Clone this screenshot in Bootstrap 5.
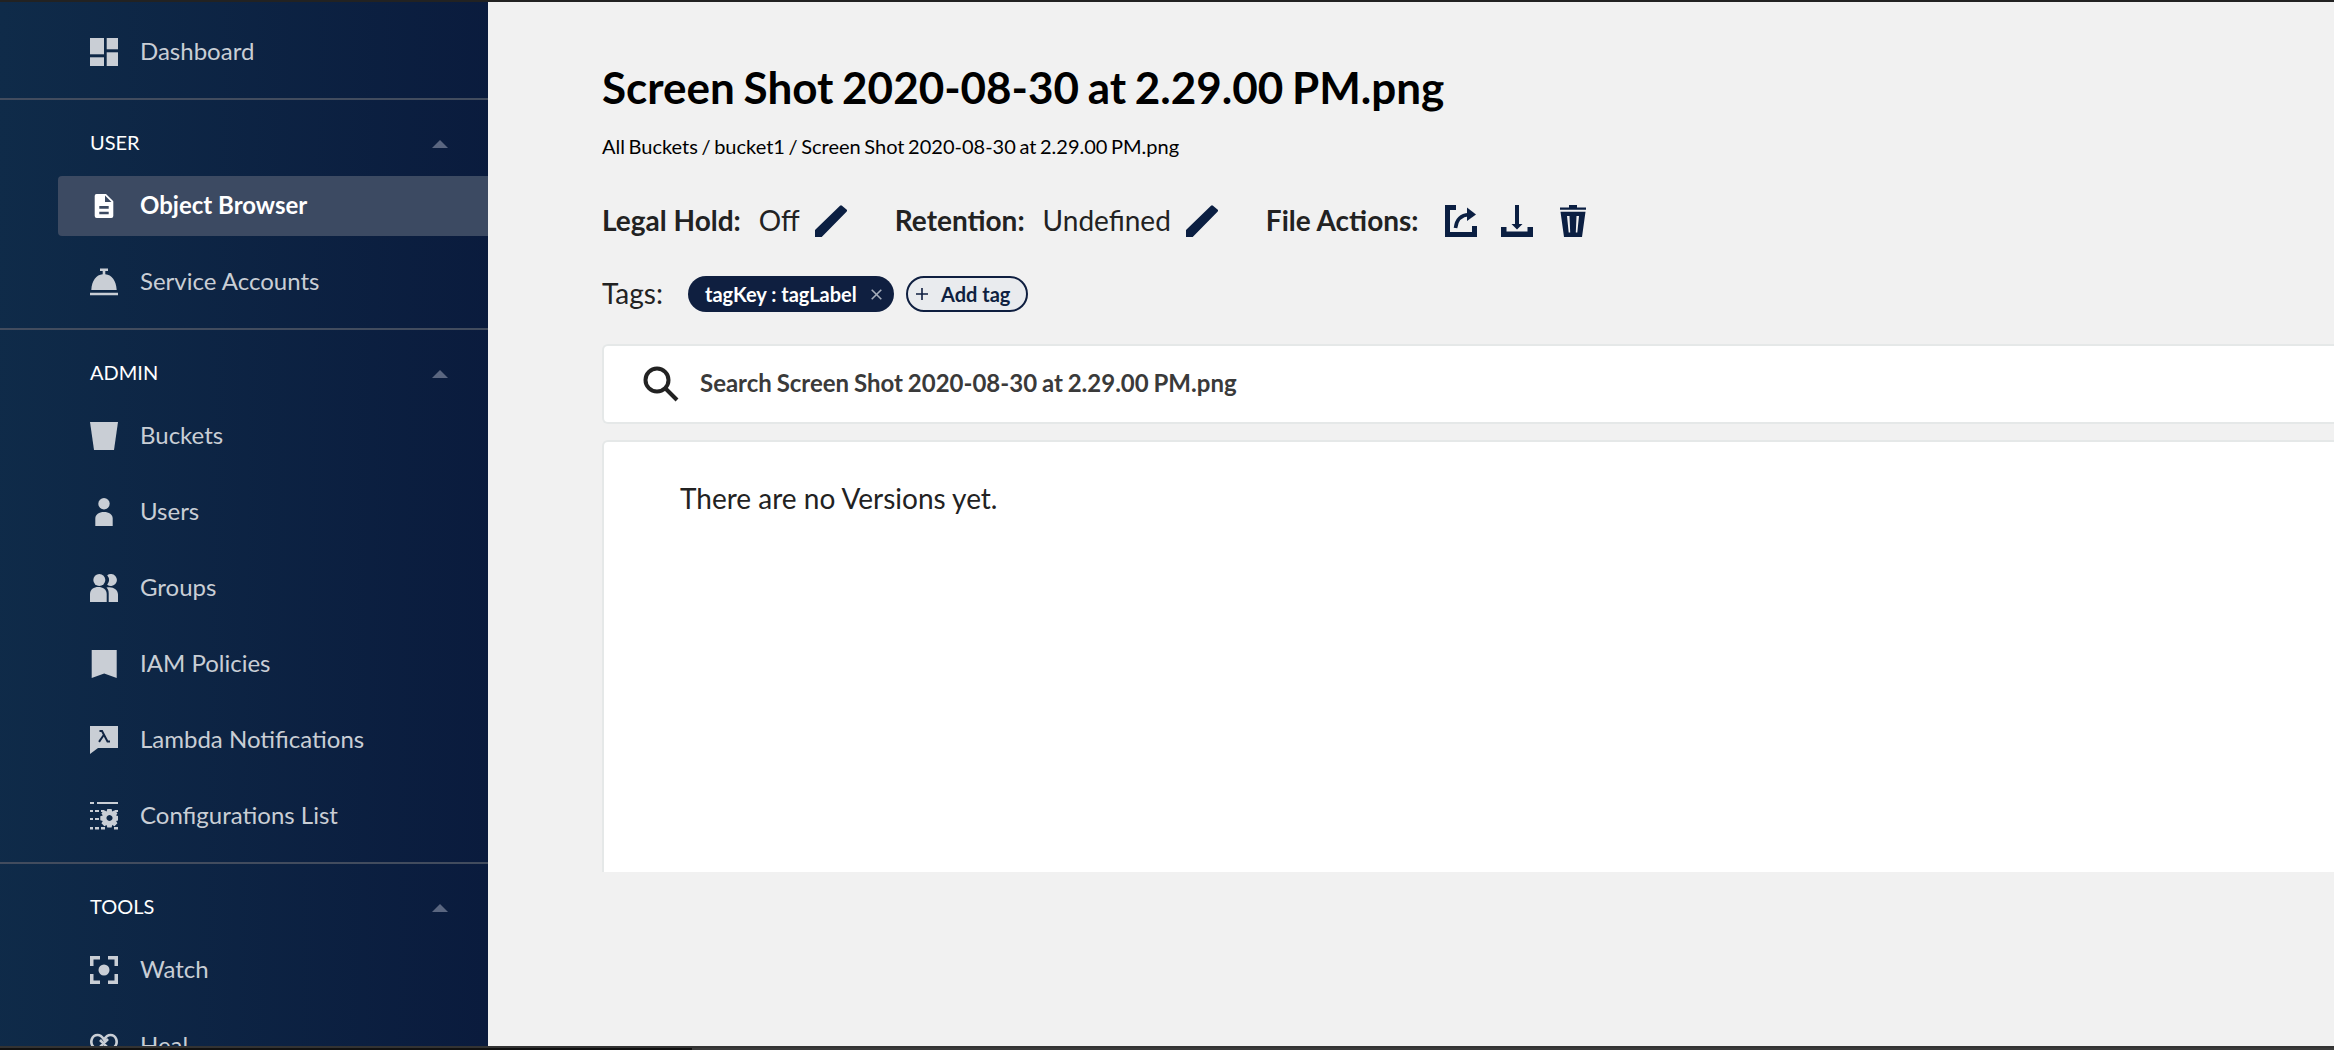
<!doctype html>
<html lang="en">
<head>
<meta charset="utf-8">
<title>Object Browser</title>
<link href="https://cdn.jsdelivr.net/npm/bootstrap@5.3.0/dist/css/bootstrap.min.css" rel="stylesheet">
<style>
html,body{height:100%;margin:0;overflow:hidden}
body{background:#000;font-family:Lato,"Liberation Sans",sans-serif;color:#222}
.top-strip{height:2px;background:#222}
.app-frame{height:1044px;background:#f1f1f1;overflow:hidden}
.bottom-strip{height:2px;background:#333}
.bottom-strip-low{height:2px;background:linear-gradient(90deg,#111 692px,#3a3a3a 692px)}
.side-bar{width:488px;flex:0 0 488px;background:linear-gradient(91deg,#0f2b49 0%,#0a1b3d 100%);overflow:hidden}
.side-bar>*{flex-shrink:0}
.side-item{height:76px;padding-left:90px;color:#c9ced5;font-size:24px}
.side-item span{margin-top:-3px}
.side-item svg{width:28px;height:28px;flex:0 0 28px;margin-right:22px;fill:#c9ced5}
.side-item-on{height:60px;margin:8px 0 8px 58px;padding-left:32px;background:#3c4a62;border-radius:4px 0 0 4px;color:#fff;font-weight:700}
.side-item-on svg{fill:#fff}
.side-top{padding-top:12px}
.side-rule{height:2px;background:#424c5e;margin-top:8px}
.side-head{height:68px;padding:27px 40px 0 90px;color:#fff;font-size:20px}
.head-caret{width:0;height:0;margin-top:13px;border-left:8px solid transparent;border-right:8px solid transparent;border-bottom:8px solid #5a6680}
.main-pane{flex:1 1 auto;min-width:0;padding:0 0 0 114px;overflow:hidden}
.page-title{font-size:44px;font-weight:700;color:#000;margin:0;line-height:56px;padding-top:57px;white-space:nowrap;word-spacing:-2px}
.crumbs{font-size:20px;color:#000;line-height:24px;margin-top:19px;word-spacing:-1.5px}
.meta-row{height:48px;margin-top:39px;font-size:28px;color:#222}
.meta-key{font-weight:700;margin-right:18px;margin-top:-3px}
.meta-val{margin-right:15px;margin-top:-3px}
.meta-key-end{margin-right:26px}
.pen-gap{margin-right:48px}
.dark-icon{fill:#0b1f42;width:32px;height:32px;flex:0 0 auto}
.act-gap{margin-right:24px}
.tag-row{height:36px;margin-top:31px;font-size:28px}
.tag-lbl{width:86px;margin-top:-2px}
.chip-dark{height:36px;width:206px;border-radius:18px;background:#0f1f40;color:#fff;font-size:20px;font-weight:700;padding:0 12px 0 17px}
.chip-dark span,.chip-line span{margin-top:-1px}
.chip-x{width:11px;height:11px;stroke:#a6adba;stroke-width:1.6;fill:none}
.chip-line{height:36px;width:122px;margin-left:12px;border:2px solid #0f1f40;border-radius:18px;background:#e9ebee;color:#0f1f40;font-size:20px;font-weight:700;padding:0 0 0 8px}
.chip-plus{width:12px;height:12px;stroke:#0f1f40;stroke-width:1.6;fill:none;margin-right:13px}
.pane-card{border:2px solid #e5e8e8;border-right:0;border-radius:6px 0 0 6px;background:#fff}
.search-card{height:80px;margin-top:32px;padding-left:38px;font-size:24px;font-weight:700;color:#3a3a3a;word-spacing:-1px}
.search-card span{margin-top:-2px}
.search-card svg{width:37px;height:37px;margin-right:21px;flex:0 0 auto;margin-top:-2px}
.list-card{height:432px;margin-top:16px;border-bottom:0;border-radius:6px 0 0 0;padding:35px 0 0 76px;font-size:28px;color:#222}
</style>
</head>
<body>
<div class="top-strip"></div>
<div class="app-frame d-flex">
  <nav class="side-bar d-flex flex-column">
    <div class="side-top">
      <div class="side-item d-flex align-items-center">
        <svg viewBox="0 0 28 28"><rect width="14" height="16.3"/><rect y="19.3" width="14" height="8.7"/><rect x="16.7" width="11.3" height="11.3"/><rect x="16.7" y="14.3" width="11.3" height="13.7"/></svg>
        <span>Dashboard</span>
      </div>
    </div>
    <div class="side-rule"></div>
    <div class="side-head d-flex justify-content-between align-items-start"><span>USER</span><i class="head-caret"></i></div>
    <div class="side-item side-item-on d-flex align-items-center">
      <svg viewBox="0 0 28 28"><path fill-rule="evenodd" d="M6.5 2H16l7.3 7.3V24a2 2 0 0 1-2 2H6.7a2 2 0 0 1-2-2V4a2 2 0 0 1 1.800-2ZM9.300 14v2.700h9.400V14ZM9.300 19.700v2.600h9.400v-2.600ZM15 3.500V10h6.500Z"/></svg>
      <span>Object Browser</span>
    </div>
    <div class="side-item d-flex align-items-center">
      <svg viewBox="0 0 28 28"><path d="M10 .5h8V3h-2.700v3.300c6.500.6 10.800 6 11.400 15.700H1.300C1.900 12.300 6.200 6.900 12.700 6.300V3H10ZM0 24.700h28V27.300H0Z"/></svg>
      <span>Service Accounts</span>
    </div>
    <div class="side-rule"></div>
    <div class="side-head d-flex justify-content-between align-items-start"><span>ADMIN</span><i class="head-caret"></i></div>
    <div class="side-item d-flex align-items-center">
      <svg viewBox="0 0 28 28"><path d="M0 0H28L24 28H4Z"/></svg>
      <span>Buckets</span>
    </div>
    <div class="side-item d-flex align-items-center">
      <svg viewBox="0 0 28 28"><circle cx="14" cy="5.700" r="5.700"/><path d="M5.300 28V20.500C5.300 16.500 9 14 14 14s8.700 2.500 8.700 6.500V28Z"/></svg>
      <span>Users</span>
    </div>
    <div class="side-item d-flex align-items-center">
      <svg viewBox="0 0 28 28"><circle cx="9.300" cy="6" r="6"/><path d="M17.200 1.300A6 6 0 1 1 17.200 10.700 7.500 7.500 0 0 0 17.200 1.300Z"/><path d="M0 28V20C0 15.500 3.800 13 8.300 13s8.400 2.500 8.400 7v8Z"/><path d="M18.700 28V19.500C18.700 17 18 15 16.500 13.600 22 12 28 15 28 20.500V28Z"/></svg>
      <span>Groups</span>
    </div>
    <div class="side-item d-flex align-items-center">
      <svg viewBox="0 0 28 28"><path d="M1.700 0H26.700V28L14.200 23.500 1.700 28Z"/></svg>
      <span>IAM Policies</span>
    </div>
    <div class="side-item d-flex align-items-center">
      <svg viewBox="0 0 28 28"><path d="M0 0H28V22H8L0 28Z"/><path d="M9.500 5H12L17.500 15.500H20" fill="none" stroke="#102443" stroke-width="2"/><path d="M13.800 9 9 15.800" fill="none" stroke="#102443" stroke-width="2"/></svg>
      <span>Lambda Notifications</span>
    </div>
    <div class="side-item d-flex align-items-center">
      <svg viewBox="0 0 28 28"><path d="M0 0h4v2H0ZM7 0h21v2H7ZM0 8h3v2H0ZM5 8h4v2H5ZM11 8h3v2h-3ZM0 16h3v2H0ZM5 16h4v2H5ZM0 25h3v2.500H0ZM5 25h4v2.500H5ZM11 25h4v2.500h-4ZM24 25h4v2.500h-4ZM17 8h3v2h-3ZM25 8h3v2h-3Z"/><path fill-rule="evenodd" d="M17.500 7.500h4.300l.6 2.600 2.300-1.300 2.900 2.900-1.300 2.200 2.400.8v4.100l-2.400.7 1.300 2.300-2.900 2.900-2.300-1.300-.6 2.600h-4.300l-.7-2.600-2.200 1.300-3-2.900 1.400-2.300-2.500-.7v-4.100l2.500-.8-1.400-2.200 3-2.900 2.200 1.300ZM19.700 13.500a3 3 0 1 0 .01 0Z" transform="translate(-.2 -.5)"/></svg>
      <span>Configurations List</span>
    </div>
    <div class="side-rule"></div>
    <div class="side-head d-flex justify-content-between align-items-start"><span>TOOLS</span><i class="head-caret"></i></div>
    <div class="side-item d-flex align-items-center">
      <svg viewBox="0 0 28 28"><path d="M0 0H10V3.500H3.500V10H0ZM18 0H28V10H24.500V3.500H18ZM0 18H3.500V24.500H10V28H0ZM24.500 18H28V28H18V24.500H24.500Z"/><circle cx="14" cy="14" r="5.500"/></svg>
      <span>Watch</span>
    </div>
    <div class="side-item d-flex align-items-center">
      <svg viewBox="0 0 28 28"><path fill="none" stroke="#c9ced5" stroke-width="2.600" d="M14 25 3 14.500C-.5 10 2 3 7.500 3c3 0 5 2 6.500 4.500C15.500 5 17.500 3 20.500 3 26 3 28.500 10 25 14.500L14 25ZM8 17 18 7M10 8l10 10"/></svg>
      <span>Heal</span>
    </div>
  </nav>
  <main class="main-pane">
    <h1 class="page-title">Screen Shot 2020-08-30 at 2.29.00 PM.png</h1>
    <div class="crumbs">All Buckets / bucket1 / Screen Shot 2020-08-30 at 2.29.00 PM.png</div>
    <div class="meta-row d-flex align-items-center">
      <span class="meta-key">Legal Hold:</span><span class="meta-val">Off</span>
      <svg class="dark-icon pen-gap" viewBox="0 0 32 32"><path d="M0 25 25 .700a1.500 1.500 0 0 1 2 0l4.500 3.800a1.500 1.500 0 0 1 0 2.200L6.700 32H0Z"/></svg>
      <span class="meta-key">Retention:</span><span class="meta-val">Undefined</span>
      <svg class="dark-icon pen-gap" viewBox="0 0 32 32"><path d="M0 25 25 .700a1.500 1.500 0 0 1 2 0l4.500 3.800a1.500 1.500 0 0 1 0 2.200L6.700 32H0Z"/></svg>
      <span class="meta-key meta-key-end">File Actions:</span>
      <svg class="dark-icon act-gap" viewBox="0 0 32 32"><path d="M0 0H11V5H5V27H27V21H32V32H0Z"/><path d="M10.500 23C11.500 14.500 16 10 24 9.500" fill="none" stroke="#0b1f42" stroke-width="3.600"/><path d="M22 2.500 31 9.500 22 16Z"/></svg>
      <svg class="dark-icon act-gap" viewBox="0 0 32 32"><path d="M0 22H5.500V26.500H26.500V22H32V32H0Z"/><path d="M14 0H18V19H21.500L16 24.500 10.500 19H14Z"/></svg>
      <svg class="dark-icon" viewBox="0 0 26 32"><path d="M9 0H17V2.400H26V4.700H0V2.400H9Z"/><path fill-rule="evenodd" d="M.5 6.700H25.500L22 32H4ZM7 11 8.700 27.500H10.200L9.500 11ZM16.500 11 15.800 27.500H17.300L19 11Z"/></svg>
    </div>
    <div class="tag-row d-flex align-items-center">
      <span class="tag-lbl">Tags:</span>
      <span class="chip-dark d-flex align-items-center justify-content-between"><span>tagKey : tagLabel</span><svg class="chip-x" viewBox="0 0 11 11"><path d="M.7.700 10.300 10.300M10.300.700.700 10.300"/></svg></span>
      <span class="chip-line d-flex align-items-center"><svg class="chip-plus" viewBox="0 0 12 12"><path d="M6 0V12M0 6H12"/></svg><span>Add tag</span></span>
    </div>
    <div class="pane-card search-card d-flex align-items-center">
      <svg viewBox="0 0 37 37"><circle cx="15" cy="15" r="11.500" fill="none" stroke="#222" stroke-width="4"/><path d="M23.500 23.500 35 35" fill="none" stroke="#222" stroke-width="4"/></svg>
      <span>Search Screen Shot 2020-08-30 at 2.29.00 PM.png</span>
    </div>
    <div class="pane-card list-card">There are no Versions yet.</div>
  </main>
</div>
<div class="bottom-strip"></div>
<div class="bottom-strip-low"></div>
<script src="https://cdn.jsdelivr.net/npm/bootstrap@5.3.0/dist/js/bootstrap.bundle.min.js"></script>
</body>
</html>
